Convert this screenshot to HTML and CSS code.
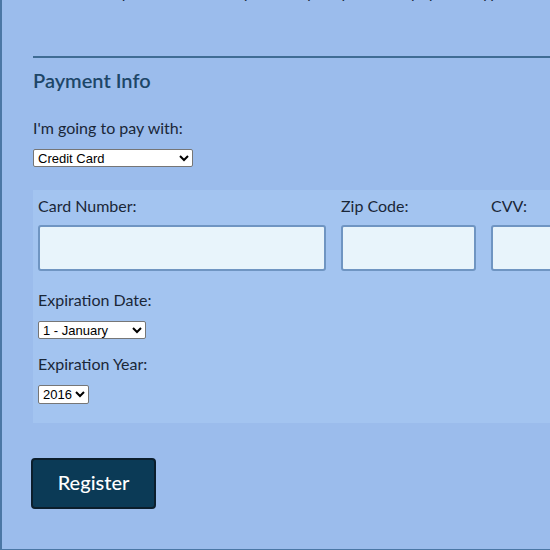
FILE: index.html
```html
<!DOCTYPE html>
<html lang="en">
<head>
<meta charset="utf-8">
<title>Register</title>
<link rel="stylesheet" href="styles.css">
</head>
<body>
<div class="page">
  <p class="intro">Select the topics that interest you, and your preferred payment type, then submit</p>
  <hr class="rule">
  <h2 class="heading">Payment Info</h2>
  <label class="label" for="pay">I'm going to pay with:</label>
  <select id="pay" class="select select-pay">
    <option>Credit Card</option>
  </select>
  <div class="card-box">
    <div class="card-row">
      <div class="field">
        <label class="label" for="cc">Card Number:</label>
        <input id="cc" class="input" type="text">
      </div>
      <div class="field">
        <label class="label" for="zip">Zip Code:</label>
        <input id="zip" class="input" type="text">
      </div>
      <div class="field">
        <label class="label" for="cvv">CVV:</label>
        <input id="cvv" class="input" type="text">
      </div>
    </div>
    <label class="label label-exp" for="month">Expiration Date:</label>
    <select id="month" class="select select-month">
      <option>1 - January</option>
    </select>
    <label class="label label-year" for="year">Expiration Year:</label>
    <select id="year" class="select select-year">
      <option>2016</option>
    </select>
  </div>
  <button class="btn" type="button">Register</button>
</div>
</body>
</html>
```
FILE: styles.css
```css
html, body {
  margin: 0;
  padding: 0;
  overflow: hidden;
  background: #9bbcec;
}
body {
  font-family: Lato, "Noto Sans", sans-serif;
  color: #1c2a3c;
}
.page {
  width: 700px;
  margin-top: -17px;
  padding: 0 0 40px 31px;
  border-left: 2px solid #4b77a5;
  border-bottom: 2px solid #4b77a5;
  background: #9bbcec;
}
.intro {
  margin: 0;
  font-size: 16px;
  line-height: 18px;
  white-space: nowrap;
}
.rule {
  margin: 55px 0 0 0;
  border: 0;
  border-top: 2px solid #3f6c94;
  height: 0;
}
.heading {
  margin: 10px 0 0 0;
  font-size: 20px;
  line-height: 24px;
  font-weight: 600;
  color: #1d4668;
}
.label {
  display: block;
  margin: 26px 0 0 0;
  font-size: 16px;
  line-height: 20px;
  color: #1a2738;
}
.select {
  display: block;
  height: 18px;
  margin: 11px 0 0 0;
  padding: 0;
  font-family: Arial, "Liberation Sans", sans-serif;
  font-size: 13px;
  color: #000;
  background: #fff;
  border: 1px solid #767676;
  border-radius: 2px;
  box-sizing: border-box;
}
.select-pay { width: 160px; }
.select-month { width: 108px; }
.select-year { width: 51px; height: 19px; }
.card-box {
  margin: 23px 0 0 0;
  padding: 6px 0 19px 5px;
  background: #a3c4f0;
}
.card-row {
  display: grid;
  grid-template-columns: 288px 135px 135px;
  column-gap: 15px;
}
.field .label {
  margin: 0;
}
.input {
  display: block;
  box-sizing: border-box;
  width: 100%;
  height: 46px;
  margin-top: 9px;
  background: #e8f4fb;
  border: 2px solid #6f95c2;
  border-radius: 3px;
}
.label-exp { margin: 19px 0 0 0; }
.label-year { margin: 15px 0 0 0; }
.btn {
  display: block;
  margin: 35px 0 0 -2px;
  padding: 0 0 3px;
  width: 125px;
  height: 51px;
  background: #0b3a56;
  color: #fff;
  border: 2px solid #0b1e2c;
  border-radius: 4px;
  font-family: Lato, "Noto Sans", sans-serif;
  font-size: 20px;
  font-weight: 500;
}
```
